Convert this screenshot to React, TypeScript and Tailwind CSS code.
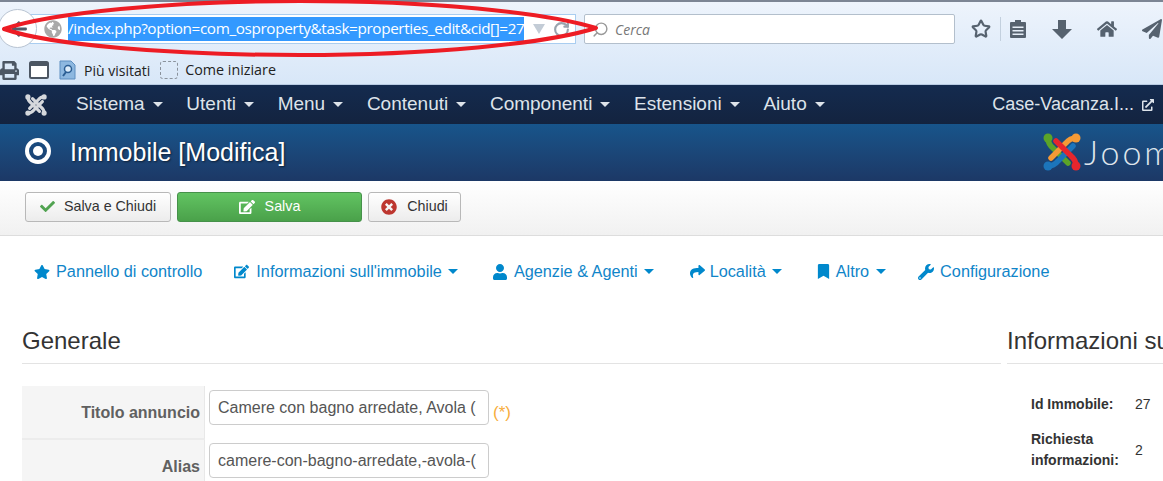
import React from 'react';
import { RotateCw, Search, Star } from 'lucide-react';
import { FaArrowLeft, FaHome, FaPaperPlane, FaStar, FaEdit, FaUser, FaShare, FaBookmark, FaWrench, FaCheck, FaTimesCircle, FaExternalLinkAlt, FaGlobeAmericas, FaPrint } from 'react-icons/fa';

const menu = ['Sistema', 'Utenti', 'Menu', 'Contenuti', 'Componenti', 'Estensioni', 'Aiuto'];

const Caret = ({ className }: { className: string }) => (
  <span className={`inline-block w-0 h-0 border-x-[5px] border-x-transparent border-t-[5px] ${className}`} />
);

// four interlocking hooks, same shape for the colour and the navbar version
const JoomlaLogo = ({ size, colors, className }: { size: number; colors: string[]; className?: string }) => (
  <svg width={size} height={size} viewBox="0 0 38 38" fill="none" strokeLinecap="round" strokeWidth="5.500" className={className}>
    <path d="M5 5 Q5 11 10 15 L25 30" stroke={colors[0]} />
    <circle cx="5" cy="5" r="4.500" fill={colors[0]} />
    <path d="M5 33 Q11 33 15 28 L30 13" stroke={colors[1]} />
    <circle cx="5" cy="33" r="4.500" fill={colors[1]} />
    <path d="M33 5 Q27 5 23 10 L8 25" stroke={colors[2]} />
    <circle cx="33" cy="5" r="4.500" fill={colors[2]} />
    <path d="M33 33 Q33 27 28 23 L13 8" stroke={colors[3]} />
    <circle cx="33" cy="33" r="4.500" fill={colors[3]} />
  </svg>
);

const Btn = ({ icon, label, className }: { icon: React.ReactNode; label: string; className: string }) => (
  <div className={`h-[30px] flex items-center justify-center rounded-[3px] border text-[14.3px] ${className}`}>
    {icon}
    <span>{label}</span>
  </div>
);

const App = () => {
  return (
    <div className="relative w-[1163px] h-[481px] overflow-hidden bg-white text-[15px] text-[#333]" style={{ fontFamily: '"Liberation Sans", Arial, sans-serif' }}>
      {/* browser chrome */}
      <div className="h-[85px] bg-gradient-to-b from-[#eef4fc] to-[#d8e7f8] border-b border-[#b8cbe2] flex flex-col">
        <div className="h-[2px] bg-[#7c8594]" />
        <div className="h-[57px] flex items-start pt-[12px] relative">
          <div className="w-[39px] h-[39px] -mt-[5px] -ml-[2px] rounded-full bg-white border border-[#b9c4d2] flex items-center justify-center shrink-0 z-10 text-[#4f5b69]">
            <FaArrowLeft size={18} className="ml-[2px]" />
          </div>
          <div className="-ml-[11px] w-[550px] h-[30px] bg-white border border-[#a9cdf0] flex items-center pl-[17px]">
            <FaGlobeAmericas size={18} className="text-[#a9a9a9] shrink-0" />
            <span className="ml-[6px] h-[24px] leading-[23px] bg-[#3399ff] text-white text-[15.3px] whitespace-nowrap" style={{ fontFamily: '"Open Sans", sans-serif', letterSpacing: '-0.38px' }}>/index.php?option=com_osproperty&amp;task=properties_edit&amp;cid[]=27</span>
            <span className="ml-[9px] shrink-0 w-0 h-0 border-x-[6px] border-x-transparent border-t-[10px] border-t-[#c3ccd6]" />
            <RotateCw size={17} strokeWidth={3} className="ml-[8px] shrink-0 text-[#9aa3ad]" />
          </div>
          <div className="ml-[8px] w-[371px] h-[30px] bg-white border border-[#b3bfcc] rounded-[2px] flex items-center pl-[7px] text-[#777] italic text-[14px]" style={{ fontFamily: '"Open Sans", sans-serif' }}>
            <Search size={17} className="text-[#999] scale-x-[-1]" />
            <span className="ml-[6px]">Cerca</span>
          </div>
          <div className="flex items-center h-[30px] text-[#56626f] ml-[16px]">
            <Star size={20} strokeWidth={2.6} />
            <div className="w-px h-[24px] bg-[#c3d0de] ml-[9px]" />
            <svg width="18" height="20" viewBox="0 0 18 20" className="ml-[8px]">
              <path d="M2 3h4V1h6v2h4a1 1 0 0 1 1 1v14a1 1 0 0 1-1 1H2a1 1 0 0 1-1-1V4a1 1 0 0 1 1-1z" fill="#56626f" />
              <path d="M3.500 7.500h11v1.500h-11zM3.500 11h11v1.500h-11zM3.500 14.500h11V16h-11z" fill="#e6eef8" />
            </svg>
            <svg width="20" height="19" viewBox="0 0 20 19" className="ml-[25px]">
              <path d="M6 0h8v9h6L10 19 0 9h6z" fill="#56626f" />
            </svg>
            <FaHome size={20} className="ml-[25px]" />
            <FaPaperPlane size={20} className="ml-[25px] shrink-0" />
          </div>
        </div>
        <div className="flex items-center h-[22px] text-[14px] text-[#222]" style={{ fontFamily: '"Open Sans", sans-serif' }}>
          <FaPrint size={19} className="text-[#4c5663] shrink-0" />
          <svg width="20" height="18" viewBox="0 0 20 18" className="ml-[10px] shrink-0">
            <rect x="1" y="1" width="18" height="16" rx="1.500" fill="#fff" stroke="#4c5663" strokeWidth="2" />
            <rect x="1" y="1" width="18" height="4" fill="#4c5663" />
          </svg>
          <svg width="17" height="20" viewBox="0 0 17 20" className="ml-[10px] shrink-0">
            <path d="M1 1h11l4 4v14H1z" fill="#8db8e0" stroke="#5d8ec0" />
            <circle cx="9" cy="9" r="3.500" fill="#dcecfa" stroke="#2c5f94" strokeWidth="1.500" />
            <path d="M7 12l-3 4" stroke="#2c5f94" strokeWidth="2" />
          </svg>
          <span className="ml-[8px]">Più visitati</span>
          <span className="ml-[10px] w-[18px] h-[18px] rounded-[3px] border border-dashed border-[#8a929c]" />
          <span className="ml-[7px] text-[14.3px]">Come iniziare</span>
        </div>
      </div>

      {/* red hand drawn mark */}
      <svg width="1163" height="70" viewBox="0 0 1163 70" className="absolute left-0 top-0 pointer-events-none z-20">
        <path d="M4 29 C50 13 170 1 300 1 C430 1 545 12 596 28 C545 44 430 55 300 55 C170 55 50 45 4 29 Z" fill="none" stroke="#ed1c24" strokeWidth="4" strokeLinejoin="round" />
      </svg>

      {/* admin navbar */}
      <div className="h-[39px] bg-gradient-to-b from-[#142b4f] to-[#13233f] flex items-center text-[#dde3ea] text-[19px]">
        <JoomlaLogo size={22} colors={['#d5d8dc', '#d5d8dc', '#d5d8dc', '#d5d8dc']} className="ml-[25px] shrink-0" />
        <div className="flex items-center gap-[23.7px] ml-[29px]">
          {menu.map(m => (
            <div key={m} className="flex items-center gap-[8px]">
              <span>{m}</span>
              <Caret className="border-t-[#dde3ea]" />
            </div>
          ))}
        </div>
        <div className="ml-auto flex items-center gap-[8px] pr-[9px] text-[18px]">
          <span>Case-Vacanza.I...</span>
          <FaExternalLinkAlt size={12} />
        </div>
      </div>

      {/* title */}
      <div className="h-[57px] bg-gradient-to-b from-[#17558b] to-[#1c3866] flex items-center overflow-hidden">
        <div className="ml-[25px] w-[26px] h-[26px] rounded-full border-[4px] border-white flex items-center justify-center shrink-0 -mt-[4px]">
          <div className="w-[10px] h-[10px] rounded-full bg-white" />
        </div>
        <h1 className="ml-[19px] text-[25px] text-white [text-shadow:1px_1px_2px_#0008]">Immobile [Modifica]</h1>
        <div className="ml-auto flex items-center w-[120px] shrink-0 -mt-[2px]">
          <JoomlaLogo size={38} colors={['#5ba428', '#1c75bb', '#f59a36', '#e6262d']} className="shrink-0" />
          <span className="ml-[3px] text-[34px] tracking-[3px] text-[#dfe5ec] whitespace-nowrap" style={{ fontFamily: 'Lato, sans-serif', fontWeight: 300 }}>Joomla!</span>
        </div>
      </div>

      {/* toolbar */}
      <div className="h-[55px] bg-gradient-to-b from-white to-[#f1f1f1] border-b border-[#ddd] flex items-center gap-[6px] pl-[25px] pb-[3px]">
        <Btn icon={<FaCheck size={15} className="text-[#51a351] mr-[9px]" />} label="Salva e Chiudi" className="w-[146px] bg-gradient-to-b from-white to-[#ececec] border-[#b8b8b8] text-[#333]" />
        <Btn icon={<FaEdit size={16} className="text-white mr-[10px]" />} label="Salva" className="w-[185px] bg-gradient-to-b from-[#62c462] to-[#4aa14a] border-[#46914a] text-white" />
        <Btn icon={<FaTimesCircle size={16} className="text-[#bd362f] mr-[10px]" />} label="Chiudi" className="w-[93px] bg-gradient-to-b from-white to-[#ececec] border-[#b8b8b8] text-[#333]" />
      </div>

      {/* component sub nav */}
      <div className="h-[71px] flex items-center pl-[34px] text-[16.25px] text-[#0f85c9] whitespace-nowrap">
        <div className="flex items-center gap-[6px]"><FaStar size={16} className="text-[#0088cc]" />Pannello di controllo</div>
        <div className="flex items-center gap-[7px] ml-[32px]"><FaEdit size={15} className="text-[#0088cc]" /><span>Informazioni sull'immobile</span><Caret className="border-t-[#0088cc] -ml-[1px]" /></div>
        <div className="flex items-center gap-[6px] ml-[34px]"><FaUser size={16} className="text-[#0088cc]" /><span>Agenzie &amp; Agenti</span><Caret className="border-t-[#0088cc]" /></div>
        <div className="flex items-center gap-[5px] ml-[36px]"><FaShare size={15} className="text-[#0088cc]" /><span>Località</span><Caret className="border-t-[#0088cc] ml-[1px]" /></div>
        <div className="flex items-center gap-[5px] ml-[34px]"><FaBookmark size={15} className="text-[#0088cc]" /><span>Altro</span><Caret className="border-t-[#0088cc] ml-[2px]" /></div>
        <div className="flex items-center gap-[6px] ml-[32px]"><FaWrench size={16} className="text-[#0088cc]" />Configurazione</div>
      </div>

      {/* content */}
      <div className="flex pl-[22px] gap-[6px]">
        <div className="w-[979px] shrink-0">
          <h2 className="h-[57px] pt-[19px] text-[24px] leading-[29px] text-[#333] border-b border-[#e3e3e3]">Generale</h2>
          <div className="mt-[22px] flex flex-col">
            <div className="flex h-[54px]">
              <div className="w-[183px] bg-[#f5f5f5] border-r border-[#e8e8e8] border-b-2 border-b-[#ececec] flex items-center justify-end pr-[4px] pt-[1px] font-bold text-[16px] text-[#606060]">Titolo annuncio</div>
              <div className="flex items-start pt-[4px] pl-[4px]">
                <div className="w-[280px] h-[35px] bg-white border border-[#ccc] rounded-[4px] flex items-center pl-[8px] text-[16px] text-[#555] overflow-hidden whitespace-nowrap">Camere con bagno arredate, Avola (</div>
                <span className="ml-[4px] mt-[10px] text-[#f7ad3c] text-[17px]">(*)</span>
              </div>
            </div>
            <div className="flex h-[52px]">
              <div className="w-[183px] bg-[#f5f5f5] border-r border-[#e8e8e8] flex items-center justify-end pr-[4px] pt-[1px] font-bold text-[16px] text-[#606060]">Alias</div>
              <div className="flex items-start pt-[3px] pl-[4px]">
                <div className="w-[280px] h-[35px] bg-white border border-[#ccc] rounded-[4px] flex items-center pl-[8px] text-[16px] text-[#555] overflow-hidden whitespace-nowrap">camere-con-bagno-arredate,-avola-(</div>
              </div>
            </div>
          </div>
        </div>
        <div className="flex-1 min-w-0">
          <h2 className="h-[57px] pt-[19px] text-[24px] leading-[29px] text-[#333] border-b border-[#e3e3e3] whitespace-nowrap overflow-hidden">Informazioni su</h2>
          <div className="mt-[29px] pl-[24px] text-[14px] text-[#333]">
            <div className="flex items-center h-[22px]">
              <span className="w-[104px] font-bold">Id Immobile:</span>
              <span>27</span>
            </div>
            <div className="flex items-center mt-[14px]">
              <span className="w-[104px] font-bold leading-[21px]">Richiesta informazioni:</span>
              <span>2</span>
            </div>
          </div>
        </div>
      </div>
    </div>
  );
};

export default App;
